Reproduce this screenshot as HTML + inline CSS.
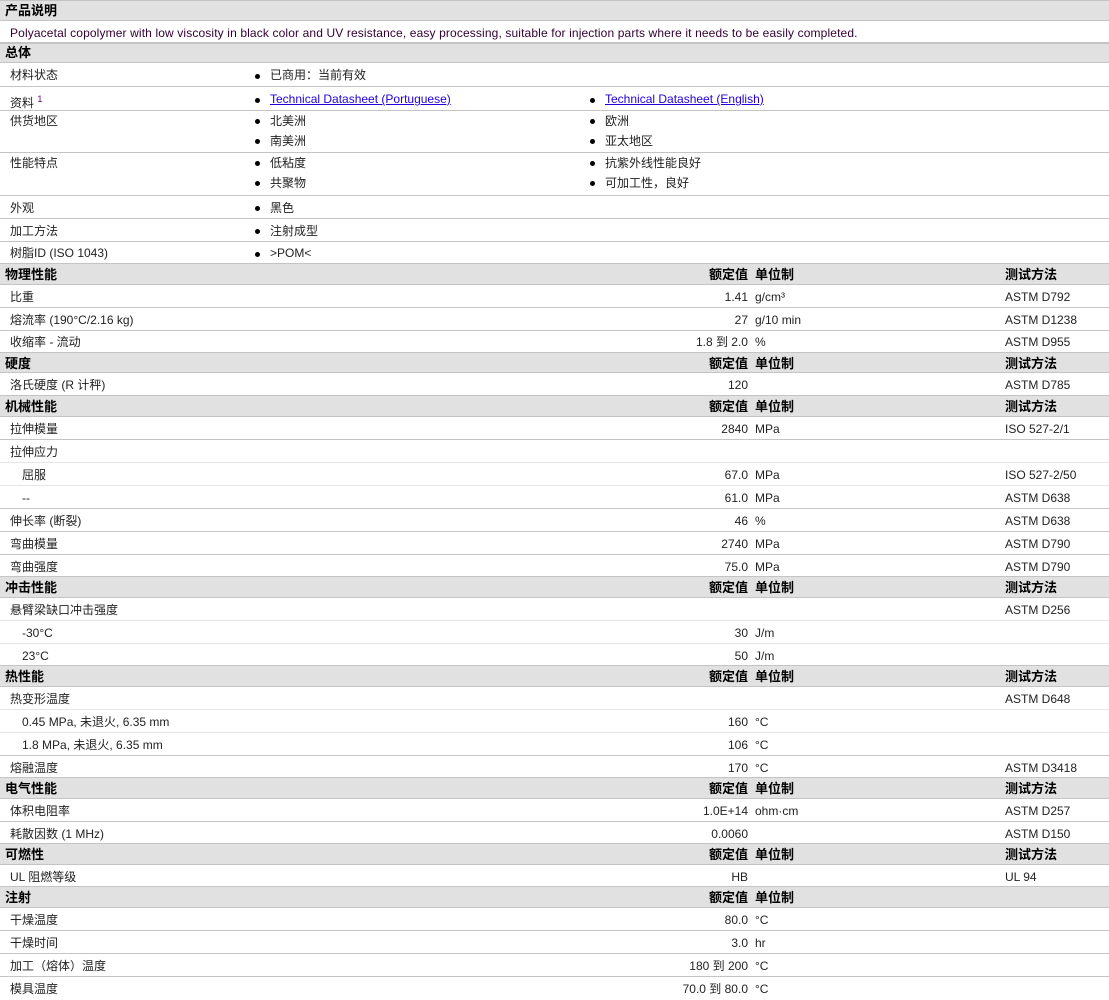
<!DOCTYPE html>
<html><head><meta charset="utf-8"><style>
*{margin:0;padding:0;box-sizing:border-box}
body{width:1109px;height:997px;background:#fff;position:relative;overflow:hidden;font-family:"Liberation Sans","Noto Sans CJK SC",sans-serif;font-size:12px;color:#222}
.r{position:absolute;left:0;width:1109px;border-bottom:1px solid #c4c4c4}
.s{border-bottom:1px solid #e6e6e6}
.h{background:#e1e1e1;border-top:1px solid #c4c4c4;font-weight:bold;font-size:13px;color:#000}
.r span{position:absolute;white-space:nowrap;top:1px}
.l{left:10px}.l2{left:22px}
.v{right:361px;text-align:right}
.u{left:755px}.m{left:1005px}
.b1{left:255px}.b2{left:590px}
.b1::before,.b2::before{content:"";position:absolute;left:0;top:50%;margin-top:-2px;width:5px;height:5px;border-radius:50%;background:#000}
.b1 i,.b2 i{font-style:normal;margin-left:15px}
a{color:#2200dd;text-decoration:underline}
</style></head><body>
<div class="r h" style="top:0;height:21px;line-height:19px"><span class="l" style="left:5px;top:0">产品说明</span></div>
<div class="r" style="top:21px;height:22px;line-height:22px;color:#330033"><span class="l" style="letter-spacing:0.13px">Polyacetal copolymer with low viscosity in black color and UV resistance, easy processing, suitable for injection parts where it needs to be easily completed.</span></div>
<div class="r h" style="top:43px;height:20px;line-height:18px"><span class="l" style="left:5px;top:0">总体</span></div>
<div class="r" style="top:63px;height:24px;line-height:23px"><span class="l">材料状态</span><span class="b1"><i>已商用：当前有效</i></span></div>
<div class="r" style="top:87px;height:24px;line-height:23px"><span class="l">资料 <sup style="font-size:9px;color:#606">1</sup></span><span class="b1"><i><a>Technical Datasheet (Portuguese)</a></i></span><span class="b2"><i><a>Technical Datasheet (English)</a></i></span></div>
<div class="r" style="top:111px;height:42px;line-height:20px"><span class="l" style="top:0">供货地区</span><span class="b1" style="top:0;height:20px"><i>北美洲</i></span><span class="b2" style="top:0;height:20px"><i>欧洲</i></span><span class="b1" style="top:20px;height:20px"><i>南美洲</i></span><span class="b2" style="top:20px;height:20px"><i>亚太地区</i></span></div>
<div class="r" style="top:153px;height:43px;line-height:20px"><span class="l" style="top:0">性能特点</span><span class="b1" style="top:0;height:20px"><i>低粘度</i></span><span class="b2" style="top:0;height:20px"><i>抗紫外线性能良好</i></span><span class="b1" style="top:20px;height:20px"><i>共聚物</i></span><span class="b2" style="top:20px;height:20px"><i>可加工性，良好</i></span></div>
<div class="r" style="top:196px;height:23px;line-height:22px"><span class="l">外观</span><span class="b1"><i>黑色</i></span></div>
<div class="r" style="top:219px;height:23px;line-height:22px"><span class="l">加工方法</span><span class="b1"><i>注射成型</i></span></div>
<div class="r" style="top:242px;height:22px;line-height:21px;border-bottom:none"><span class="l">树脂ID (ISO 1043)</span><span class="b1"><i>&gt;POM&lt;</i></span></div>

<div class="r h" style="top:263px;height:22px;line-height:20px"><span class="l" style="left:5px">物理性能</span><span class="v">额定值</span><span class="u">单位制</span><span class="m">测试方法</span></div>
<div class="r" style="top:285px;height:23px;line-height:22px"><span class="l">比重</span><span class="v">1.41</span><span class="u">g/cm³</span><span class="m">ASTM D792</span></div>
<div class="r" style="top:308px;height:23px;line-height:22px"><span class="l">熔流率 (190°C/2.16 kg)</span><span class="v">27</span><span class="u">g/10 min</span><span class="m">ASTM D1238</span></div>
<div class="r" style="top:331px;height:22px;line-height:21px;border-bottom:none"><span class="l">收缩率 - 流动</span><span class="v">1.8 到 2.0</span><span class="u">%</span><span class="m">ASTM D955</span></div>

<div class="r h" style="top:352px;height:21px;line-height:19px"><span class="l" style="left:5px">硬度</span><span class="v">额定值</span><span class="u">单位制</span><span class="m">测试方法</span></div>
<div class="r" style="top:373px;height:23px;line-height:23px;border-bottom:none"><span class="l">洛氏硬度 (R 计秤)</span><span class="v">120</span><span class="m">ASTM D785</span></div>

<div class="r h" style="top:395px;height:22px;line-height:20px"><span class="l" style="left:5px">机械性能</span><span class="v">额定值</span><span class="u">单位制</span><span class="m">测试方法</span></div>
<div class="r" style="top:417px;height:23px;line-height:22px"><span class="l">拉伸模量</span><span class="v">2840</span><span class="u">MPa</span><span class="m">ISO 527-2/1</span></div>
<div class="r s" style="top:440px;height:23px;line-height:22px"><span class="l">拉伸应力</span></div>
<div class="r s" style="top:463px;height:23px;line-height:22px"><span class="l2">屈服</span><span class="v">67.0</span><span class="u">MPa</span><span class="m">ISO 527-2/50</span></div>
<div class="r" style="top:486px;height:23px;line-height:22px"><span class="l2">--</span><span class="v">61.0</span><span class="u">MPa</span><span class="m">ASTM D638</span></div>
<div class="r" style="top:509px;height:23px;line-height:22px"><span class="l">伸长率 (断裂)</span><span class="v">46</span><span class="u">%</span><span class="m">ASTM D638</span></div>
<div class="r" style="top:532px;height:23px;line-height:22px"><span class="l">弯曲模量</span><span class="v">2740</span><span class="u">MPa</span><span class="m">ASTM D790</span></div>
<div class="r" style="top:555px;height:22px;line-height:22px;border-bottom:none"><span class="l">弯曲强度</span><span class="v">75.0</span><span class="u">MPa</span><span class="m">ASTM D790</span></div>

<div class="r h" style="top:576px;height:22px;line-height:20px"><span class="l" style="left:5px">冲击性能</span><span class="v">额定值</span><span class="u">单位制</span><span class="m">测试方法</span></div>
<div class="r s" style="top:598px;height:23px;line-height:22px"><span class="l">悬臂梁缺口冲击强度</span><span class="m">ASTM D256</span></div>
<div class="r s" style="top:621px;height:23px;line-height:22px"><span class="l2">-30°C</span><span class="v">30</span><span class="u">J/m</span></div>
<div class="r" style="top:644px;height:22px;line-height:22px;border-bottom:none"><span class="l2">23°C</span><span class="v">50</span><span class="u">J/m</span></div>

<div class="r h" style="top:665px;height:22px;line-height:20px"><span class="l" style="left:5px">热性能</span><span class="v">额定值</span><span class="u">单位制</span><span class="m">测试方法</span></div>
<div class="r s" style="top:687px;height:23px;line-height:22px"><span class="l">热变形温度</span><span class="m">ASTM D648</span></div>
<div class="r s" style="top:710px;height:23px;line-height:22px"><span class="l2">0.45 MPa, 未退火, 6.35 mm</span><span class="v">160</span><span class="u">°C</span></div>
<div class="r" style="top:733px;height:23px;line-height:22px"><span class="l2">1.8 MPa, 未退火, 6.35 mm</span><span class="v">106</span><span class="u">°C</span></div>
<div class="r" style="top:756px;height:22px;line-height:22px;border-bottom:none"><span class="l">熔融温度</span><span class="v">170</span><span class="u">°C</span><span class="m">ASTM D3418</span></div>

<div class="r h" style="top:777px;height:22px;line-height:20px"><span class="l" style="left:5px">电气性能</span><span class="v">额定值</span><span class="u">单位制</span><span class="m">测试方法</span></div>
<div class="r" style="top:799px;height:23px;line-height:22px"><span class="l">体积电阻率</span><span class="v">1.0E+14</span><span class="u">ohm·cm</span><span class="m">ASTM D257</span></div>
<div class="r" style="top:822px;height:22px;line-height:22px;border-bottom:none"><span class="l">耗散因数 (1 MHz)</span><span class="v">0.0060</span><span class="m">ASTM D150</span></div>

<div class="r h" style="top:843px;height:22px;line-height:20px"><span class="l" style="left:5px">可燃性</span><span class="v">额定值</span><span class="u">单位制</span><span class="m">测试方法</span></div>
<div class="r" style="top:865px;height:22px;line-height:22px;border-bottom:none"><span class="l">UL 阻燃等级</span><span class="v">HB</span><span class="m">UL 94</span></div>

<div class="r h" style="top:886px;height:22px;line-height:20px"><span class="l" style="left:5px">注射</span><span class="v">额定值</span><span class="u">单位制</span></div>
<div class="r" style="top:908px;height:23px;line-height:22px"><span class="l">干燥温度</span><span class="v">80.0</span><span class="u">°C</span></div>
<div class="r" style="top:931px;height:23px;line-height:22px"><span class="l">干燥时间</span><span class="v">3.0</span><span class="u">hr</span></div>
<div class="r" style="top:954px;height:23px;line-height:22px"><span class="l">加工（熔体）温度</span><span class="v">180 到 200</span><span class="u">°C</span></div>
<div class="r" style="top:977px;height:22px;line-height:22px;border-bottom:none"><span class="l">模具温度</span><span class="v">70.0 到 80.0</span><span class="u">°C</span></div>
</body></html>
